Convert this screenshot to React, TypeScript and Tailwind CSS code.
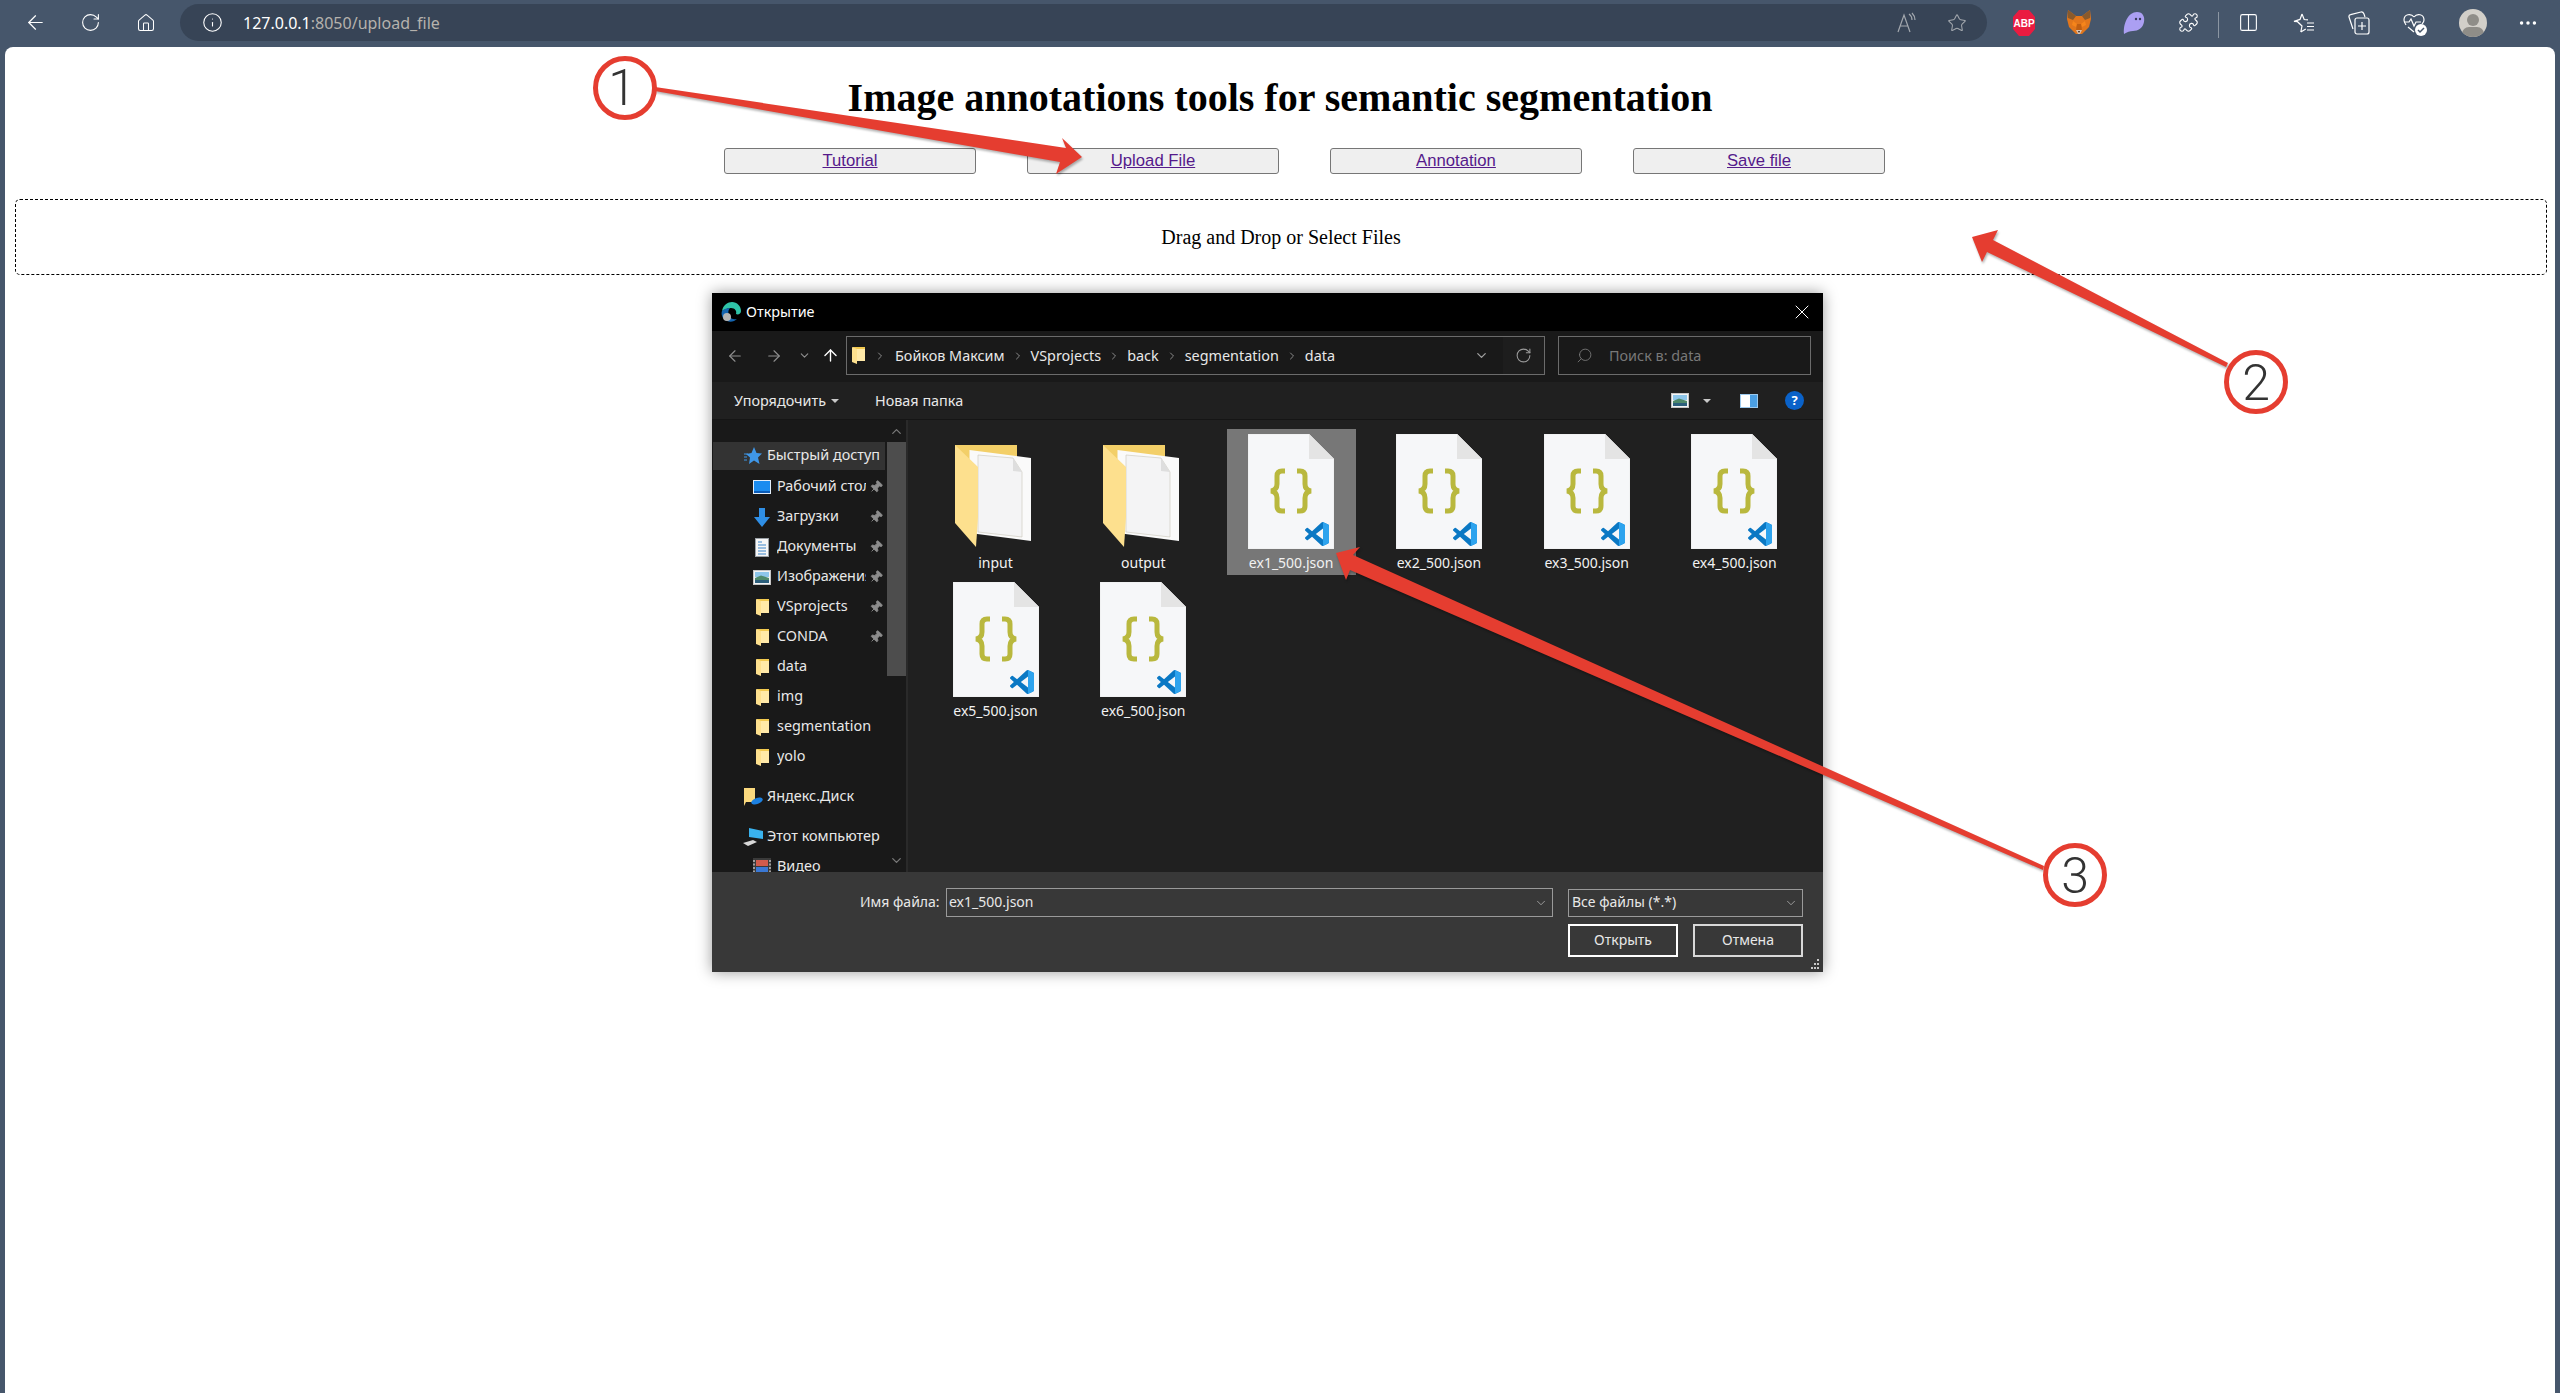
import { ArrowLeft, ArrowRight, ArrowUp, ChevronDown, ChevronRight, ChevronUp, Columns2, Ellipsis, House, Info, Pin, Puzzle, RotateCw, Search, Star, X } from "lucide-react";
import type { ReactNode } from "react";

const sans = "[font-family:'Noto_Sans','Open_Sans',sans-serif]";

function FoldersmallIcon() {
  return (
    <svg width="13" height="17" viewBox="0 0 13 17">
      <rect x="1" y="0" width="12" height="14" fill="#f2c94f" />
      <polygon points="0,0 5,2 5,17 0,15" fill="#fde08e" />
      <polygon points="5,2 13,2 13,14 5,14" fill="#ffe9a8" />
    </svg>
  );
}

function DesktopIcon() {
  return (
    <svg width="18" height="14" viewBox="0 0 18 14">
      <rect x="0.5" y="0.5" width="17" height="13" fill="#1a8cf0" stroke="#e3eefa" />
      <rect x="1" y="11" width="16" height="2" fill="#0b5cb8" />
    </svg>
  );
}

function DownloadIcon() {
  return (
    <svg width="18" height="19" viewBox="0 0 18 19">
      <polygon points="6,0 12,0 12,9 17,9 9,19 1,9 6,9" fill="#2f8fe6" />
    </svg>
  );
}

function DocsIcon() {
  return (
    <svg width="14" height="19" viewBox="0 0 14 19">
      <rect x="0.5" y="0.5" width="13" height="18" fill="#f6f6f6" stroke="#9aa0a6" />
      <path d="M3 4h4M3 7h8M3 10h8M3 13h8M3 16h8" stroke="#3c86c9" strokeWidth="1.2" />
    </svg>
  );
}

function PictureIcon() {
  return (
    <svg width="18" height="15" viewBox="0 0 18 15">
      <rect x="0.5" y="0.5" width="17" height="14" fill="#f4f4f4" stroke="#c5c5c5" />
      <rect x="2" y="2" width="14" height="5" fill="#8ec6ea" />
      <polygon points="2,8 8,5.5 16,8 16,10 2,10" fill="#4f8a6b" />
      <rect x="2" y="10" width="14" height="3" fill="#2c5f7c" />
    </svg>
  );
}

function QuickIcon() {
  return (
    <svg width="18" height="18" viewBox="0 0 18 18">
      <polygon points="10,0 12.5,6 18,6.5 14,10.5 15.5,17 10,13.5 5,17 6,10.5 2,7 7.5,6" fill="#3f97e8" />
      <path d="M0 7h4M0 10h3M0 13h3" stroke="#3f97e8" strokeWidth="1" />
    </svg>
  );
}

function YandexIcon() {
  return (
    <svg width="19" height="18" viewBox="0 0 19 18">
      <polygon points="0,0 11,0 11,14 2,14 0,18" fill="#fbd97e" />
      <ellipse cx="13" cy="13" rx="6" ry="3" fill="#1c80e0" transform="rotate(-20 13 13)" />
    </svg>
  );
}

function ComputerIcon() {
  return (
    <svg width="20" height="18" viewBox="0 0 20 18">
      <polygon points="6,0 20,3 20,11 6,9" fill="#39b2ee" />
      <polygon points="0,15 10,12 14,14 5,18" fill="#d8d8d8" />
    </svg>
  );
}

function VideoIcon() {
  return (
    <svg width="18" height="18" viewBox="0 0 18 18">
      <rect width="18" height="18" fill="#3a3a3a" />
      <rect x="3" y="2" width="12" height="6" fill="#d05b4c" />
      <rect x="3" y="9" width="12" height="7" fill="#3a78d4" />
      <path d="M1 2v14M17 2v14" stroke="#c8c8c8" strokeWidth="1.4" strokeDasharray="2 1.5" />
    </svg>
  );
}

function PushPin() {
  return <Pin size={14} className="rotate-45 fill-[#8c8c8c] text-[#8c8c8c]" strokeWidth={1.5} />;
}

function VsLogo() {
  return (
    <svg width="24" height="24" viewBox="0 0 24 24">
      <path
        d="M23.15 2.587L18.21.21a1.494 1.494 0 0 0-1.705.29l-9.46 8.63-4.12-3.128a.999.999 0 0 0-1.276.057L.327 7.261A1 1 0 0 0 .326 8.74L3.899 12 .326 15.26a1 1 0 0 0 .001 1.479L1.65 17.94a.999.999 0 0 0 1.276.057l4.12-3.128 9.46 8.63a1.492 1.492 0 0 0 1.704.29l4.942-2.377A1.5 1.5 0 0 0 24 20.06V3.939a1.5 1.5 0 0 0-.85-1.352zm-5.146 14.861L10.826 12l7.178-5.448v10.896z"
        fill="#0a78c4"
      />
      <path d="M18 0.1l5.15 2.487A1.5 1.5 0 0 1 24 3.94v16.12a1.5 1.5 0 0 1-.85 1.353L18 23.9z" fill="#2da3ee" />
    </svg>
  );
}

function JsonFileIcon() {
  return (
    <div className="relative h-[115px] w-[86px]">
      <svg width="86" height="115" viewBox="0 0 86 115">
        <polygon points="0,0 61,0 86,25 86,115 0,115" fill="#f6f7f9" stroke="#e2e2e2" strokeWidth="0.5" />
        <polygon points="61,0 86,25 61,25" fill="#e4e4e4" />
        <path d="M37 37h-3q-5 0-5 5v8q0 6-6 7q6 1 6 7v8q0 5 5 5h3" fill="none" stroke="#b9b83e" strokeWidth="5" />
        <path d="M49 37h3q5 0 5 5v8q0 6 6 7q-6 1-6 7v8q0 5-5 5h-3" fill="none" stroke="#b9b83e" strokeWidth="5" />
      </svg>
      <div className="absolute left-[57px] top-[88px]">
        <VsLogo />
      </div>
    </div>
  );
}

function FolderIcon() {
  return (
    <svg width="76" height="102" viewBox="0 0 76 102" className="mb-[2px] mr-[5px]">
      <polygon points="0,0 62,0 62,22 0,22" fill="#f3cf68" />
      <polygon points="14.5,5 76,13 76,96 14.5,88" fill="#fafafa" />
      <polygon points="23,10 58,13 67,27 67,92 23,87" fill="#f4f4f5" stroke="#c9c6b8" strokeWidth="0.6" />
      <polygon points="58,13 67,27 58,26" fill="#dedede" />
      <polygon points="0,0 23,22 23,72 21,102 0,78" fill="#fde08e" />
    </svg>
  );
}

function FileTile({ name, folder, selected }: { name: string; folder?: boolean; selected?: boolean }) {
  return (
    <div className={`flex h-[146px] w-[129px] flex-col items-center pt-[5px] ${selected ? "bg-[#777777]" : ""}`}>
      <div className="flex h-[115px] items-end justify-center">{folder ? <FolderIcon /> : <JsonFileIcon />}</div>
      <div className="mt-[4px] text-[14px] leading-[20px] text-[#f2f2f2]">{name}</div>
    </div>
  );
}

function NavRow({ label, icon, pin, indent, active }: { label: string; icon: ReactNode; pin?: boolean; indent?: boolean; active?: boolean }) {
  return (
    <div className={`flex w-[172px] shrink-0 items-center overflow-hidden ${active ? "mb-[2px] h-[28px] bg-[#333333]" : "h-[30px]"} ${indent ? "pl-[37px]" : "pl-[28px]"}`}>
      <div className={`flex shrink-0 items-center justify-center ${indent ? "w-[27px] pr-[3px]" : "w-[26px] pr-[2px]"}`}>{icon}</div>
      <span className="min-w-0 flex-1 overflow-hidden whitespace-nowrap pb-[2px] text-[14.4px] text-[#e8e8e8]">{label}</span>
      {pin && (
        <span className="ml-[2px] mr-[2px] flex w-[15px] shrink-0 justify-center">
          <PushPin />
        </span>
      )}
    </div>
  );
}

function Crumb({ label }: { label: string }) {
  return (
    <>
      <span className="whitespace-nowrap">{label}</span>
      <ChevronRight size={12} className="mx-[7px] text-[#8a8a8a]" />
    </>
  );
}

function Toolbar() {
  return (
    <div className="flex h-[47px] shrink-0 items-start pl-2 pt-[4px] text-white">
      <div className="flex h-[37px] w-[55px] items-center justify-center"><ArrowLeft size={23} strokeWidth={1.25} /></div>
      <div className="flex h-[37px] w-[55px] items-center justify-center"><RotateCw size={21} strokeWidth={1.25} /></div>
      <div className="flex h-[37px] w-[55px] items-center justify-center"><House size={20} strokeWidth={1.25} /></div>
      <div className="ml-[7px] flex h-[37px] w-[1807px] items-center rounded-full bg-[#374456]">
        <Info size={21} strokeWidth={1.25} className="ml-[22px]" />
        <div className={`ml-[20px] text-[16px] ${sans}`}>
          <span className="text-white">127.0.0.1</span>
          <span className="text-[#b5b2ad]">:8050/upload_file</span>
        </div>
        <div className="ml-auto flex items-center gap-[29px] pr-[20px] text-[#a3a8ae]">
          <svg width="22" height="22" viewBox="0 0 22 22" fill="none" stroke="currentColor" strokeWidth="1.2">
            <path d="M2 20L8 3l6 17M4.5 14h7" />
            <path d="M13 2q3 2 3 6M16 1q3 3 3 7" />
          </svg>
          <Star size={20} strokeWidth={1.25} />
        </div>
      </div>
      <div className="ml-[9px] flex h-[37px] w-[55px] items-center justify-center">
        <svg width="22" height="26" viewBox="0 0 22 26">
          <polygon points="6,0 16,0 22,7 22,19 16,26 6,26 0,19 0,7" fill="#ea1b40" />
          <text x="11" y="17" textAnchor="middle" fill="#ffffff" className="text-[10px] font-bold [font-family:'Liberation_Sans',sans-serif]">ABP</text>
        </svg>
      </div>
      <div className="flex h-[37px] w-[55px] items-center justify-center">
        <svg width="24" height="25" viewBox="0 0 24 25">
          <polygon points="1,0 9,6 15,6 23,0 24,9 22,17 15,24 9,24 2,17 0,9" fill="#e2761b" />
          <polygon points="1,0 9,6 6,10 1,8" fill="#8a5a2b" />
          <polygon points="23,0 15,6 18,10 23,8" fill="#8a5a2b" />
          <polygon points="6,11 10,14 9,17 5,15" fill="#f6851b" />
          <polygon points="18,11 14,14 15,17 19,15" fill="#f6851b" />
          <polygon points="10,14 14,14 15,20 9,20" fill="#c05f12" />
          <polygon points="9,20 15,20 13,24 11,24" fill="#d7c1b3" />
          <polygon points="11,21 13,21 12,23" fill="#2d2118" />
        </svg>
      </div>
      <div className="flex h-[37px] w-[55px] items-center justify-center">
        <svg width="22" height="24" viewBox="0 0 22 24">
          <path d="M1 23C0 13 5 1 14 1c6 0 8 5 7 10-1 6-6 9-11 9-3 0-6 1-9 3z" fill="#ab9ff2" />
          <circle cx="13" cy="8" r="1.2" fill="#3a3a5a" />
          <circle cx="17" cy="8" r="1.2" fill="#3a3a5a" />
        </svg>
      </div>
      <div className="flex h-[37px] w-[55px] items-center justify-center"><Puzzle size={21} strokeWidth={1.25} /></div>
      <div className="mx-[2px] mt-[8px] h-[26px] w-px bg-[#8b96a3]" />
      <div className="flex h-[37px] w-[55px] items-center justify-center"><Columns2 size={21} strokeWidth={1.25} /></div>
      <div className="flex h-[37px] w-[55px] items-center justify-center">
        <svg width="22" height="22" viewBox="0 0 22 22" fill="none" stroke="currentColor" strokeWidth="1.2">
          <path d="M9 2l2.2 5.5 3.8.3M7.8 20L9 14 4.5 9.7l-3.5-.3L7 7.4 9 2M7.8 20l5-3" />
          <path d="M14 11h7M14 14.5h7M14 18h7" />
        </svg>
      </div>
      <div className="flex h-[37px] w-[55px] items-center justify-center">
        <svg width="22" height="24" viewBox="0 0 22 24" fill="none" stroke="currentColor" strokeWidth="1.2">
          <path d="M5 18L1 6q-.4-2 1.6-2.4L13 1q2-.3 3 2l1 3" />
          <rect x="7" y="7" width="14" height="16" rx="2" />
          <path d="M14 11v8M10 15h8" />
        </svg>
      </div>
      <div className="relative flex h-[37px] w-[55px] items-center justify-center">
        <svg width="22" height="22" viewBox="0 0 22 22" fill="none" stroke="currentColor" strokeWidth="1.2">
          <path d="M11 5C8 1 1 2 1 8c0 2 1 3.5 2 5M11 5c3-4 10-3 10 3 0 2-1 3-2 4M11 20l-6-5" />
          <path d="M1 10h5l2-3 3 7 2-4h5" />
        </svg>
        <svg width="12" height="12" viewBox="0 0 12 12" className="absolute left-[29px] top-[20px]">
          <circle cx="6" cy="6" r="6" fill="#ffffff" />
          <path d="M3 6l2 2 4-4" fill="none" stroke="#46566b" strokeWidth="1.5" />
        </svg>
      </div>
      <div className="ml-[4px] flex h-[37px] w-[55px] items-center justify-center">
        <div className="relative h-[28px] w-[28px] overflow-hidden rounded-full bg-[#d2cfc9]">
          <div className="absolute left-[8px] top-[5px] h-[12px] w-[12px] rounded-full bg-[#8f8d88]" />
          <div className="absolute left-[3px] top-[18px] h-[14px] w-[22px] rounded-full bg-[#8f8d88]" />
        </div>
      </div>
      <div className="flex h-[37px] w-[55px] items-center justify-center"><Ellipsis size={22} strokeWidth={1.8} /></div>
    </div>
  );
}

function OpenDialog() {
  return (
    <div className={`ml-[707px] mt-[18px] flex h-[679px] w-[1111px] flex-col self-start shadow-[0_0_14px_rgba(0,0,0,0.4)] ${sans}`}>
      <div className="flex h-[38px] shrink-0 items-center bg-black pl-[9px] pr-[9px] text-white">
        <svg width="20" height="20" viewBox="0 0 20 20">
          <path d="M1 9C2 3 7 0 11 0c5 0 9 4 9 9 0 3-3 4-5 3 1-3-1-6-5-6-4 0-7 2-9 3z" fill="#2fc4a8" />
          <path d="M1 9c2-2 5-3 8-3-2 2-2 5-1 8 1 2 4 4 8 3-3 3-9 4-13 0-2-2-3-5-2-8z" fill="#1565b0" />
          <circle cx="6" cy="15" r="4" fill="#b5b5b5" />
        </svg>
        <span className="ml-[5px] text-[14.4px]">Открытие</span>
        <X size={24} strokeWidth={1} className="ml-auto" />
      </div>

      <div className="flex h-[51px] shrink-0 items-center bg-[#191919] pb-[2px] text-[14.4px] text-[#e8e8e8]">
        <ArrowLeft size={18} strokeWidth={1.5} className="ml-[14px] text-[#8f8f8f]" />
        <ArrowRight size={18} strokeWidth={1.5} className="ml-[21px] text-[#8f8f8f]" />
        <ChevronDown size={13} strokeWidth={2} className="ml-[15px] text-[#8f8f8f]" />
        <ArrowUp size={19} strokeWidth={1.75} className="ml-[10px] text-white" />
        <div className="ml-[6px] flex h-[39px] w-[699px] items-center border border-[#6b6b6b] pl-[5px]">
          <FoldersmallIcon />
          <ChevronRight size={12} className="mx-[9px] text-[#8a8a8a]" />
          <Crumb label="Бойков Максим" />
          <Crumb label="VSprojects" />
          <Crumb label="back" />
          <Crumb label="segmentation" />
          <span>data</span>
          <ChevronDown size={15} className="ml-auto mr-[14px] text-[#a0a0a0]" />
          <div className="flex h-full w-[41px] items-center justify-center bg-[#1d1d1d]">
            <RotateCw size={17} strokeWidth={1.5} className="text-[#9a9a9a]" />
          </div>
        </div>
        <div className="ml-[13px] flex h-[39px] w-[253px] items-center border border-[#6b6b6b] pl-[17px] text-[#787878]">
          <Search size={17} strokeWidth={1.25} className="-scale-x-100" />
          <span className="ml-[16px]">Поиск в: data</span>
        </div>
      </div>

      <div className="flex h-[38px] shrink-0 items-center border-b border-[#151515] bg-[#202020] pl-[22px] pr-[19px] text-[14.4px] text-[#e8e8e8]">
        <span>Упорядочить</span>
        <span className="ml-[5px] h-0 w-0 border-x-[4px] border-t-[4px] border-x-transparent border-t-[#c8c8c8]" />
        <span className="ml-[36px]">Новая папка</span>
        <div className="ml-auto flex items-center">
          <PictureIcon />
          <span className="ml-[14px] h-0 w-0 border-x-[4px] border-t-[4px] border-x-transparent border-t-[#c8c8c8]" />
          <div className="ml-[29px] flex h-[14px] w-[18px] border border-[#9cc9ee] bg-white">
            <div className="ml-auto w-[7px] bg-[#4b9fe3]" />
          </div>
          <div className="ml-[27px] flex h-[19px] w-[19px] items-center justify-center rounded-full bg-[#0a62c9] text-[13px] font-bold text-white">?</div>
        </div>
      </div>

      <div className="flex h-[452px] shrink-0 overflow-hidden bg-[#202020]">
        <div className="flex w-[196px] shrink-0 border-r-2 border-[#2a2a2a] bg-[#191919]">
          <div className="flex w-[175px] shrink-0 flex-col pl-[1px] pt-[22px]">
            <NavRow label="Быстрый доступ" icon={<QuickIcon />} active />
            <NavRow label="Рабочий стол" icon={<DesktopIcon />} pin indent />
            <NavRow label="Загрузки" icon={<DownloadIcon />} pin indent />
            <NavRow label="Документы" icon={<DocsIcon />} pin indent />
            <NavRow label="Изображения" icon={<PictureIcon />} pin indent />
            <NavRow label="VSprojects" icon={<FoldersmallIcon />} pin indent />
            <NavRow label="CONDA" icon={<FoldersmallIcon />} pin indent />
            <NavRow label="data" icon={<FoldersmallIcon />} indent />
            <NavRow label="img" icon={<FoldersmallIcon />} indent />
            <NavRow label="segmentation" icon={<FoldersmallIcon />} indent />
            <NavRow label="yolo" icon={<FoldersmallIcon />} indent />
            <div className="h-[10px] shrink-0" />
            <NavRow label="Яндекс.Диск" icon={<YandexIcon />} />
            <div className="h-[10px] shrink-0" />
            <NavRow label="Этот компьютер" icon={<ComputerIcon />} />
            <NavRow label="Видео" icon={<VideoIcon />} indent />
          </div>
          <div className="flex w-[19px] shrink-0 flex-col items-center text-[#7a7a7a]">
            <div className="flex h-[22px] items-center justify-center"><ChevronUp size={15} /></div>
            <div className="h-[234px] w-full bg-[#4d4d4d]" />
            <div className="mt-auto flex h-[22px] items-center justify-center pb-[2px]"><ChevronDown size={15} /></div>
          </div>
        </div>
        <div className="grid flex-1 grid-cols-[repeat(6,129px)] content-start gap-x-[18.8px] gap-y-[2px] pl-[23px] pt-[9px]">
          <FileTile name="input" folder />
          <FileTile name="output" folder />
          <FileTile name="ex1_500.json" selected />
          <FileTile name="ex2_500.json" />
          <FileTile name="ex3_500.json" />
          <FileTile name="ex4_500.json" />
          <FileTile name="ex5_500.json" />
          <FileTile name="ex6_500.json" />
        </div>
      </div>

      <div className="flex h-[100px] shrink-0 flex-col bg-[#383838] pl-[148px] pt-[16px] text-[14px] text-[#e8e8e8]">
        <div className="flex items-center">
          <span className="w-[80px] whitespace-nowrap pb-[2px]">Имя файла:</span>
          <div className="ml-[6px] flex h-[29px] w-[607px] items-center border border-[#9a9a9a] pl-[2px]">
            <span className="pb-[2px]">ex1_500.json</span>
            <ChevronDown size={14} strokeWidth={1.25} className="ml-auto mr-[4px] text-[#bdbdbd]" />
          </div>
          <div className="ml-[15px] flex h-[28px] w-[235px] items-center border border-[#9a9a9a] pl-[3px]">
            <span className="pb-[2px]">Все файлы (*.*)</span>
            <ChevronDown size={14} strokeWidth={1.25} className="ml-auto mr-[4px] text-[#bdbdbd]" />
          </div>
        </div>
        <div className="ml-[708px] mt-[7px] flex items-start gap-[15px]">
          <div className="flex h-[33px] w-[110px] shrink-0 items-center justify-center border-2 border-white pb-[2px]">Открыть</div>
          <div className="flex h-[33px] w-[110px] shrink-0 items-center justify-center border-2 border-[#d8d8d8] pb-[2px]">Отмена</div>
          <svg width="10" height="12" viewBox="0 0 10 12" className="-ml-[8px] mt-[34px] shrink-0">
            <path d="M7 1h2v2H7zM4 5h2v2H4zM7 5h2v2H7zM1 9h2v2H1zM4 9h2v2H4zM7 9h2v2H7z" fill="#c8c8c8" />
          </svg>
        </div>
      </div>
    </div>
  );
}

function Annotations() {
  const red = "#e53d30";
  const digit = "fill-[#333333] text-[50px] font-light [font-family:'Roboto','Liberation_Sans',sans-serif]";
  return (
    <svg width="2560" height="1393" viewBox="0 0 2560 1393" className="pointer-events-none absolute left-0 top-0">
      <g className="drop-shadow-[1px_2px_1px_rgba(0,0,0,0.3)]">
        <polygon points="655,87 1066,148 1062,138 1082,157 1056,174 1060,162 655,91" fill={red} />
        <polygon points="2228,363 1993,240 1998,230 1972,237 1982,262 1987,252 2226,367" fill={red} />
        <polygon points="2044,866 1353,555 1360,547 1336,553 1346,580 1350,570 2043,870" fill={red} />
      </g>
      <circle cx="625" cy="88" r="29.5" fill="#ffffff" stroke={red} strokeWidth="5" />
      <circle cx="2256" cy="382" r="29.5" fill="#ffffff" stroke={red} strokeWidth="5" />
      <circle cx="2075" cy="875" r="29.5" fill="#ffffff" stroke={red} strokeWidth="5" />
      <text x="622" y="105" textAnchor="middle" className={digit}>1</text>
      <text x="2256" y="400" textAnchor="middle" className={digit}>2</text>
      <text x="2075" y="893" textAnchor="middle" className={digit}>3</text>
    </svg>
  );
}

export default function App() {
  const navLinks = ["Tutorial", "Upload File", "Annotation", "Save file"];
  return (
    <div className="relative flex h-[1393px] w-[2560px] flex-col overflow-hidden bg-[#46566b]">
      <Toolbar />
      <main className="mx-[5px] flex flex-1 flex-col rounded-t-lg bg-white">
        <h1 className="mt-[27px] text-center text-[40px] font-bold leading-[47px] text-black [font-family:'Liberation_Serif',serif]">
          Image annotations tools for semantic segmentation
        </h1>
        <div className="mt-[27px] flex justify-center gap-[51px] pl-[49px]">
          {navLinks.map((item) => (
            <button
              key={item}
              className="h-[26px] w-[252px] rounded-[3px] border border-[#767676] bg-[#efefef] text-[16.7px] leading-[22px] text-[#551a8b] underline [font-family:'Liberation_Sans',sans-serif]"
            >
              {item}
            </button>
          ))}
        </div>
        <div className="ml-[10px] mr-[8px] mt-[25px] flex h-[76px] items-center justify-center rounded-[5px] border border-dashed border-black text-[20px] text-black [font-family:'Liberation_Serif',serif]">
          Drag and Drop or Select Files
        </div>
        <OpenDialog />
      </main>
      <Annotations />
    </div>
  );
}
